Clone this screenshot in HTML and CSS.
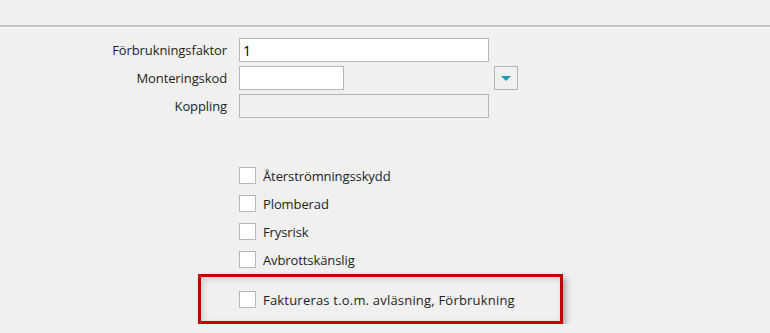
FILE: index.html
```html
<!DOCTYPE html>
<html lang="sv">
<head>
  <meta charset="UTF-8">
  <title>Mätare</title>
  <link rel="stylesheet" href="styles.css">
</head>
<body>
  <div class="toolbar"></div>
  <div class="panel">
    <div class="fields">
      <div class="row">
        <label class="lbl" for="faktor">Förbrukningsfaktor</label>
        <input type="text" id="faktor" class="field wide" value="1">
      </div>
      <div class="row">
        <label class="lbl" for="kod">Monteringskod</label>
        <input type="text" id="kod" class="field short">
        <button type="button" class="drop"><span class="arrow"></span></button>
      </div>
      <div class="row">
        <label class="lbl" for="koppling">Koppling</label>
        <input type="text" id="koppling" class="field wide disabled" disabled>
      </div>
    </div>

    <div class="checks">
      <label class="check"><span class="box"></span>Återströmningsskydd</label>
      <label class="check"><span class="box"></span>Plomberad</label>
      <label class="check"><span class="box"></span>Frysrisk</label>
      <label class="check"><span class="box"></span>Avbrottskänslig</label>
    </div>

    <div class="highlight">
      <label class="check long"><span class="box"></span>Faktureras t.o.m. avläsning, Förbrukning</label>
    </div>
  </div>
</body>
</html>
```

FILE: styles.css
```css
* { box-sizing: border-box; }
body {
  margin: 0;
  background: #f0f0f0;
  font-family: "Open Sans", "Liberation Sans", sans-serif;
  font-size: 13px;
  color: #1e1e1e;
  overflow: hidden;
}
.toolbar {
  height: 27px;
  border-bottom: 2px solid #c2c2c2;
  box-shadow: 0 1px 0 #fafafa;
}
.panel {
  padding-top: 11px;
}
.fields {
  display: flex;
  flex-direction: column;
  gap: 4px;
}
.row {
  display: flex;
  align-items: center;
  height: 24px;
}
.lbl {
  width: 239px;
  padding-right: 12px;
  text-align: right;
  letter-spacing: -0.1px;
}
.field {
  height: 24px;
  border: 1px solid #b5b5b5;
  background: #fff;
  padding: 0 3px;
  font: inherit;
  font-size: 14px;
  color: #000;
  outline: none;
}
.field.wide { width: 250px; }
.field.short { width: 105px; }
.field.disabled { background: #f0f0f0; }
.drop {
  margin-left: 150px;
  width: 24px;
  height: 24px;
  border: 1px solid #b5b5b5;
  background: #f0f0f0;
  padding: 0;
  display: flex;
  align-items: center;
  justify-content: center;
}
.arrow {
  width: 0;
  height: 0;
  border-left: 5px solid transparent;
  border-right: 5px solid transparent;
  border-top: 5px solid #1e9bb0;
}
.checks {
  margin-top: 49px;
  padding-left: 239px;
  display: flex;
  flex-direction: column;
  gap: 11px;
}
.check {
  display: flex;
  align-items: center;
  height: 17px;
  letter-spacing: -0.1px;
}
.check.long { letter-spacing: 0.2px; }
.box {
  width: 17px;
  height: 17px;
  border: 1px solid #b8b8b8;
  background: #fff;
  margin-right: 7px;
  flex: none;
}
.highlight {
  margin: 6px 0 0 198px;
  width: 365px;
  height: 50px;
  border: 3px solid #c40000;
  box-shadow: 3px 4px 6px rgba(0,0,0,0.3), inset 2px 2px 6px rgba(0,0,0,0.15);
  padding: 14px 0 0 38px;
}
```
